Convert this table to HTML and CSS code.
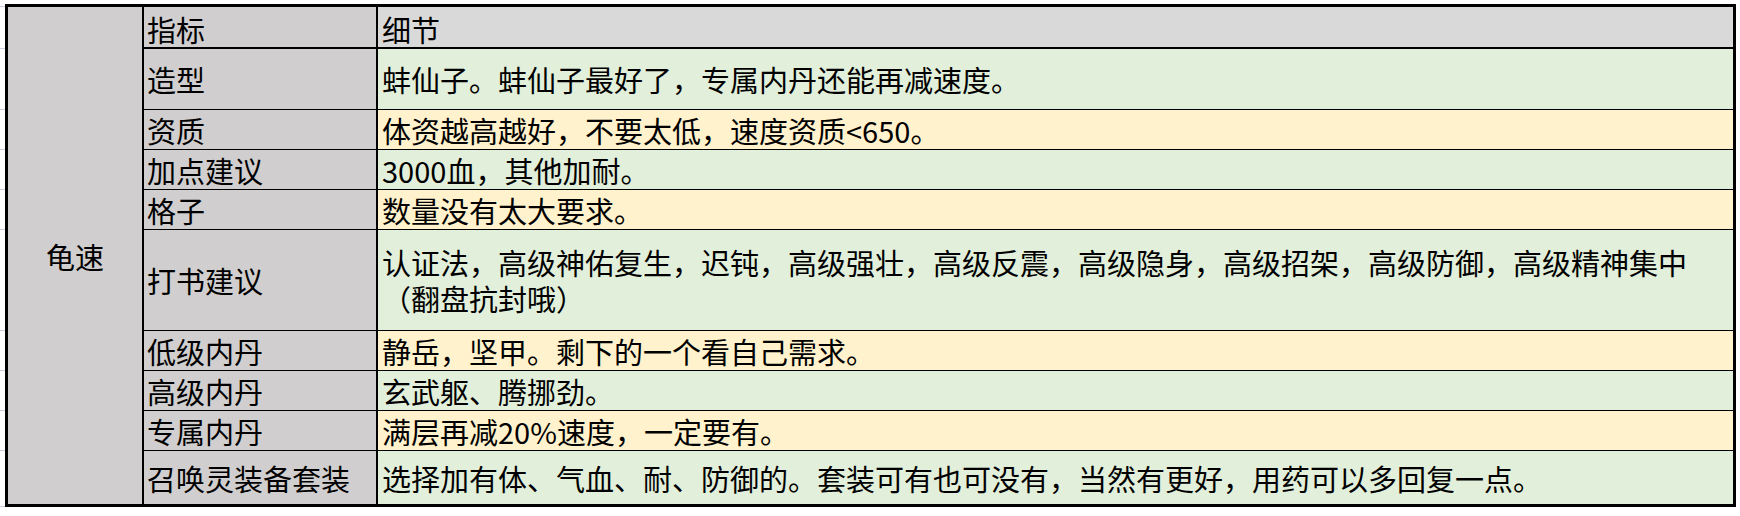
FILE: index.html
```html
<!DOCTYPE html>
<html lang="zh-CN">
<head>
<meta charset="utf-8">
<title>龟速</title>
<link rel="stylesheet" href="styles.css">
</head>
<body>
<div class="page">
  <div class="gutter">
    <div class="g g42"></div>
    <div class="g g61"></div>
    <div class="g g40"></div>
    <div class="g g40"></div>
    <div class="g g40"></div>
    <div class="g g101"></div>
    <div class="g g40"></div>
    <div class="g g40"></div>
    <div class="g g40"></div>
    <div class="g g56"></div>
    <div class="g g1"></div>
  </div>
  <div class="sheet">
    <div class="cell merged">龟速</div>

    <div class="cell key head-row">指标</div>
    <div class="cell val head head-row">细节</div>

    <div class="cell key">造型</div>
    <div class="cell val green">蚌仙子。蚌仙子最好了，专属内丹还能再减速度。</div>

    <div class="cell key">资质</div>
    <div class="cell val yellow">体资越高越好，不要太低，速度资质&lt;650。</div>

    <div class="cell key">加点建议</div>
    <div class="cell val green">3000血，其他加耐。</div>

    <div class="cell key">格子</div>
    <div class="cell val yellow">数量没有太大要求。</div>

    <div class="cell key">打书建议</div>
    <div class="cell val green multi">认证法，高级神佑复生，迟钝，高级强壮，高级反震，高级隐身，高级招架，高级防御，高级精神集中<br>（翻盘抗封哦）</div>

    <div class="cell key">低级内丹</div>
    <div class="cell val yellow">静岳，坚甲。剩下的一个看自己需求。</div>

    <div class="cell key">高级内丹</div>
    <div class="cell val green">玄武躯、腾挪劲。</div>

    <div class="cell key">专属内丹</div>
    <div class="cell val yellow">满层再减20%速度，一定要有。</div>

    <div class="cell key last">召唤灵装备套装</div>
    <div class="cell val green last">选择加有体、气血、耐、防御的。套装可有也可没有，当然有更好，用药可以多回复一点。</div>
  </div>
</div>
</body>
</html>
```

FILE: styles.css
```css
* {
  box-sizing: border-box;
}

html, body {
  margin: 0;
  padding: 0;
  background: #ffffff;
}

body {
  font-family: "Noto Sans CJK SC", "Noto Sans", sans-serif;
  font-size: 29px;
  color: #000000;
}

.page {
  display: flex;
  align-items: flex-start;
}

.gutter {
  width: 5px;
  margin-top: 6px;
  display: flex;
  flex-direction: column;
}

.g {
  border-top: 1px solid #c9d0e1;
}

.g42 { height: 42px; }
.g61 { height: 61px; }
.g40 { height: 40px; }
.g101 { height: 101px; }
.g56 { height: 56px; }
.g1 { height: 1px; }

.sheet {
  margin-top: 4px;
  width: 1731px;
  border: 3px solid #000000;
  display: grid;
  grid-template-columns: 136px 234px 1fr;
  grid-template-rows: 42px 61px 40px 40px 40px 101px 40px 40px 40px 53px;
}

.cell {
  display: flex;
  align-items: center;
  white-space: nowrap;
  line-height: 36px;
  border-bottom: 1px solid #000000;
}

.merged {
  grid-column: 1;
  grid-row: 1 / span 10;
  justify-content: center;
  background: #d0cece;
  border-right: 2px solid #000000;
  border-bottom: none;
}

.key {
  grid-column: 2;
  background: #d0cece;
  border-right: 2px solid #000000;
  padding-left: 3px;
}

.val {
  grid-column: 3;
  padding-left: 4px;
}

.head-row {
  border-bottom: 2px solid #000000;
  padding-top: 3px;
}

.head {
  background: #d9d9d9;
}

.green {
  background: #e2efda;
}

.yellow {
  background: #fff2cc;
}

.multi {
  white-space: normal;
}

.last {
  border-bottom: none;
}
```
